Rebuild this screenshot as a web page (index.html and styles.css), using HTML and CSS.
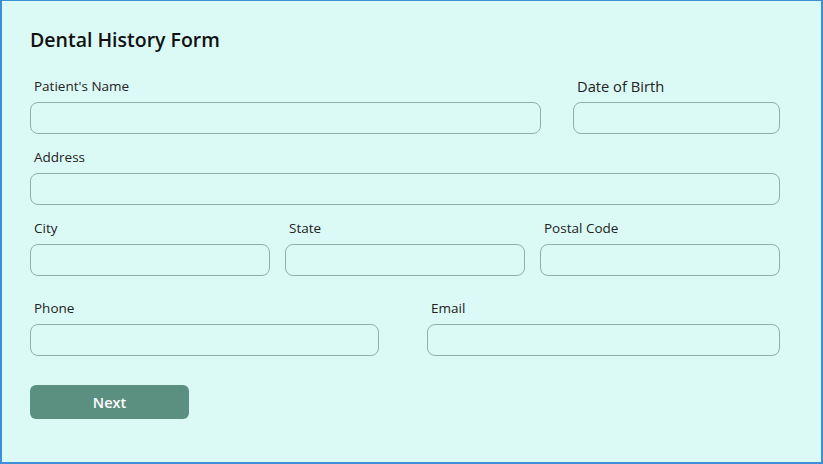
FILE: index.html
```html
<!DOCTYPE html>
<html lang="en">
<head>
    <meta charset="UTF-8">
    <meta name="viewport" content="width=device-width, initial-scale=1.0">
    <title>Dental History Form</title>
    <link rel="stylesheet" href="styles.css">
</head>
<body>
    <div id="form-container">
        <h3>Dental History Form</h3>

        <!-- Name and birth date -->
        <div class="form-row row-name">
            <div class="form-group">
                <label for="patient_name">Patient's Name</label>
                <input type="text" id="patient_name">
            </div>
            <div class="form-group">
                <label for="dob" class="label-lg">Date of Birth</label>
                <input type="text" id="dob">
            </div>
        </div>

        <!-- Address -->
        <div class="form-row">
            <div class="form-group">
                <label for="address">Address</label>
                <input type="text" id="address">
            </div>
        </div>

        <!-- City / state / postal -->
        <div class="form-row row-city">
            <div class="form-group">
                <label for="city">City</label>
                <input type="text" id="city">
            </div>
            <div class="form-group">
                <label for="state">State</label>
                <input type="text" id="state">
            </div>
            <div class="form-group">
                <label for="postal">Postal Code</label>
                <input type="text" id="postal">
            </div>
        </div>

        <!-- Contact -->
        <div class="form-row row-contact">
            <div class="form-group">
                <label for="phone">Phone</label>
                <input type="text" id="phone">
            </div>
            <div class="form-group">
                <label for="email">Email</label>
                <input type="text" id="email">
            </div>
        </div>

        <button class="btn-next">Next</button>
    </div>
</body>
</html>
```

FILE: styles.css
```css
html, body {
    height: 100%;
}
body {
    font-family: "Open Sans", Arial, sans-serif;
    margin: 0;
    background-color: #dcfaf5;
    box-sizing: border-box;
    border: 2px solid #3d8fd6;
    border-top-width: 1px;
    color: #1c1c1c;
}
#form-container {
    padding: 27px 41px 0 28px;
}
h3 {
    font-size: 19.5px;
    font-weight: 600;
    line-height: 24px;
    margin: 0 0 25px;
    color: #111;
}
.form-row {
    display: grid;
    grid-template-columns: 1fr;
    margin-bottom: 14px;
}
.row-name {
    grid-template-columns: 511px 1fr;
    column-gap: 32px;
}
.row-city {
    grid-template-columns: 240px 240px 1fr;
    column-gap: 15px;
    margin-bottom: 23px;
}
.row-contact {
    grid-template-columns: 349px 1fr;
    column-gap: 48px;
    margin-bottom: 29px;
}
.form-group {
    display: flex;
    flex-direction: column;
}
.form-group label {
    font-size: 13.5px;
    line-height: 18px;
    margin: 0 0 7px 4px;
    color: #222;
}
.form-group .label-lg {
    font-size: 14.7px;
}
input {
    height: 32px;
    box-sizing: border-box;
    border: 1px solid #8fb0aa;
    border-radius: 8px;
    background: transparent;
    padding: 0 10px;
    font-size: 14px;
    margin: 0;
}
.btn-next {
    width: 159px;
    height: 34px;
    background: #5b9080;
    color: #fff;
    border: none;
    border-radius: 6px;
    font-family: inherit;
    font-size: 14.5px;
    font-weight: 600;
    cursor: pointer;
}
```
